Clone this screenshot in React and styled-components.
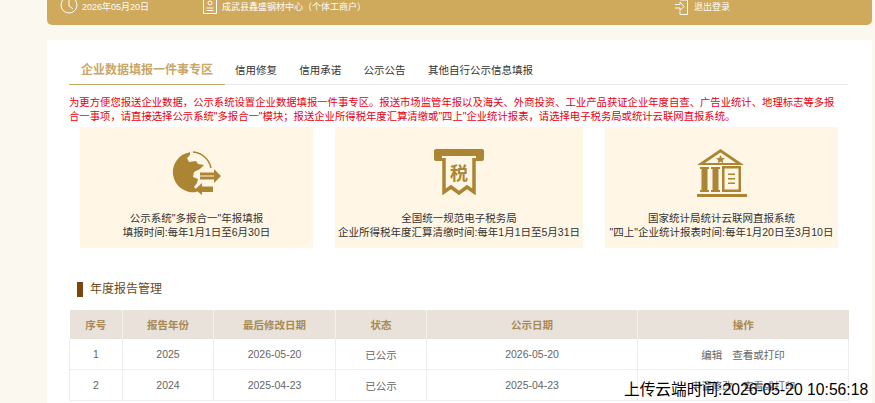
import React from "react";
import styled, { createGlobalStyle } from "styled-components";

const Global = createGlobalStyle`
  html, body {
    margin: 0;
    height: 100%;
    overflow: hidden;
    background: #fbf8f0;
  }
  body, td, th {
    font-family: "Liberation Sans", "Noto Sans CJK SC", sans-serif;
  }
`;

const Page = styled.div`
  width: 875px;
  height: 403px;
  overflow: hidden;
  position: relative;
  padding: 0 3px 0 47px;
  box-sizing: border-box;
`;

const TopBar = styled.header`
  height: 25px;
  background: #cfa95c;
  border-radius: 0 0 5px 5px;
  display: flex;
  color: #fff;
  font-size: 9px;
  padding-left: 13px;
  overflow: hidden;
`;

const TopItem = styled.div`
  display: flex;
  gap: ${(p) => p.$gap || 4}px;
  align-items: flex-start;
  margin-left: ${(p) => p.$left || 0}px;
  line-height: 14px;
`;

const Panel = styled.main`
  margin-top: 15px;
  background: #fff;
  padding: 15px 0 0 22px;
  height: 363px;
  box-sizing: border-box;
`;

const Tabs = styled.nav`
  display: flex;
  width: 779px;
  height: 30px;
  border-bottom: 1px solid #eaeaea;
  box-sizing: border-box;
`;

const Tab = styled.a`
  height: 30px;
  box-sizing: border-box;
  line-height: 30px;
  color: ${(p) => (p.$active ? "#c9a766" : "#333")};
  font-size: ${(p) => (p.$active ? 12 : 10.5)}px;
  font-weight: ${(p) => (p.$active ? "bold" : "normal")};
  padding: 0 ${(p) => (p.$active ? 12 : 0)}px;
  margin-right: ${(p) => (p.$active ? 10 : 22.3)}px;
  border-bottom: ${(p) => (p.$active ? "1px solid #c9a766" : "none")};
`;

const Notice = styled.p`
  margin: 11px 0 0;
  width: 775px;
  color: #e60012;
  font-size: 10.35px;
  line-height: 14px;
`;

const Cards = styled.section`
  display: grid;
  grid-template-columns: 233px 248px 233px;
  column-gap: 22px;
  margin: 3px 0 0 11px;
`;

const Card = styled.div`
  height: 121px;
  background: #fff6e5;
  padding-top: 22px;
  box-sizing: border-box;
  text-align: center;
  color: #333;
  font-size: 10.5px;
  line-height: 14px;
`;

const IconSlot = styled.div`
  height: 49px;
  svg {
    display: block;
    margin: 0 auto;
  }
`;

const CardText = styled.div`
  margin-top: 13px;
  white-space: nowrap;
`;

const Title = styled.h2`
  margin: 34px 0 0 8px;
  height: 15px;
  border-left: 6px solid #7a4510;
  padding-left: 7px;
  font-size: 12px;
  line-height: 15px;
  font-weight: normal;
  color: #6b4a22;
`;

const Table = styled.table`
  margin: 13px 0 0;
  width: 779px;
  border-collapse: collapse;
  table-layout: fixed;
  font-size: 10.5px;
`;

const Th = styled.th`
  height: 29px;
  padding: 0;
  background: #e8e2da;
  color: #a98a55;
  font-weight: bold;
  border-left: 1px solid #f3f0ea;
  &:first-child { border-left: none; }
`;

const Td = styled.td`
  height: 30px;
  padding: 0;
  text-align: center;
  color: #666;
  border: 1px solid #eee;
  border-top: none;
`;

const Action = styled.a`
  color: #666;
  margin: 0 5px;
`;

const TimeStamp = styled.div`
  position: absolute;
  left: 624px;
  top: 381px;
  font-size: 15.7px;
  line-height: 18px;
  color: #000;
  white-space: nowrap;
`;

const ClockIcon = () => (
  <svg width="18" height="15" viewBox="0 0 18 15" fill="none" stroke="#fff" strokeWidth="1">
    <circle cx="9" cy="5" r="8" />
    <path d="M9 0v6l4 3" />
  </svg>
);

const OwnerIcon = () => (
  <svg width="14" height="14" viewBox="0 0 14 14" fill="none" stroke="#fff" strokeWidth="1">
    <path d="M.5 0v13.5h13V0" />
    <circle cx="7" cy="3" r="2" />
    <path d="M3.5 8h7M3.5 10.5h7" />
  </svg>
);

const LogoutIcon = () => (
  <svg width="13" height="15" viewBox="0 0 13 15" fill="none" stroke="#fff" strokeWidth="1">
    <path d="M5 0h7.500v14.500H5v-3" />
    <path d="M0 4.500h5V2l4 4.500-4 4V8H0" />
  </svg>
);

const GlobeIcon = () => (
  <svg width="50" height="46" viewBox="0 0 50 46" fill="#ab8534">
    <path d="M18 3.200A20 20 0 0 0 24 43l2-1-4-4 3-4 1-4-5-2 1-5 6-3 4-4-6-1-2-3-7 1-2-4 3-3z" />
    <path d="M21 3.100A20 20 0 0 1 39 19" fill="none" stroke="#ab8534" strokeWidth="1.500" />
    <path d="M28 23.500h14V20l7 7-7 7v-3.500H28zM28 26.500v1h14v-1z" fillRule="evenodd" />
    <path d="M41 37.500H30V34l-7 6.500 7 5.500v-3h11z" />
  </svg>
);

const TaxIcon = () => (
  <svg width="50" height="46" viewBox="0 0 50 46">
    <rect x="0" y="0" width="50" height="12" rx="2" fill="#ab8534" />
    <rect x="8" y="7" width="34" height="3" fill="#fff6e5" />
    <path d="M10 9v34l7-5 8 6 8-6 7 5V9" fill="#fff6e5" stroke="#ab8534" strokeWidth="3.500" />
    <text x="25" y="31" textAnchor="middle" fontSize="18" fontWeight="bold" fill="#ab8534">税</text>
  </svg>
);

const BankIcon = () => (
  <svg width="50" height="49" viewBox="0 0 50 49" fill="#ab8534">
    <path d="M23.500 0L47 16H0zM23.500 3.500L8 14h31z" fillRule="evenodd" />
    <path d="M23.500 6l1.300 2.900 3.100.3-2.300 2 .7 3-2.800-1.600-2.800 1.600.7-3-2.300-2 3.100-.3z" />
    <rect x="3" y="18" width="9" height="2" />
    <rect x="4.500" y="20" width="6" height="21" />
    <rect x="3" y="41" width="9" height="2" />
    <rect x="14" y="18" width="9" height="2" />
    <rect x="15.500" y="20" width="6" height="21" />
    <rect x="14" y="41" width="9" height="2" />
    <path d="M25 17h19v26H25zM27.500 19.500v21h14v-21z" fillRule="evenodd" />
    <path d="M31 24.500h7V26h-7zM31 29h7v1.500h-7zM31 33.500h7V35h-7z" />
    <rect x="0" y="45" width="50" height="3" />
  </svg>
);

const columns = [53, 91, 122, 91, 211, 211];
const heads = ["序号", "报告年份", "最后修改日期", "状态", "公示日期", "操作"];
const rows = [
  ["1", "2025", "2026-05-20", "已公示", "2026-05-20", ["编辑", "查看或打印"]],
  ["2", "2024", "2025-04-23", "已公示", "2025-04-23", ["申请修改", "查看或打印"]],
];

export default function App() {
  return (
    <Page>
      <Global />
      <TopBar>
        <TopItem>
          <ClockIcon />
          <span>2026年05月20日</span>
        </TopItem>
        <TopItem $left={54} $gap={5}>
          <OwnerIcon />
          <span>成武县鑫盛钢材中心（个体工商户）</span>
        </TopItem>
        <TopItem $left={309} $gap={6}>
          <LogoutIcon />
          <span>退出登录</span>
        </TopItem>
      </TopBar>
      <Panel>
        <Tabs>
          <Tab $active>企业数据填报一件事专区</Tab>
          <Tab>信用修复</Tab>
          <Tab>信用承诺</Tab>
          <Tab>公示公告</Tab>
          <Tab>其他自行公示信息填报</Tab>
        </Tabs>
        <Notice>
          为更方便您报送企业数据，公示系统设置企业数据填报一件事专区。报送市场监管年报以及海关、外商投资、工业产品获证企业年度自查、广告业统计、地理标志等多报合一事项，请直接选择公示系统"多报合一"模块；报送企业所得税年度汇算清缴或"四上"企业统计报表，请选择电子税务局或统计云联网直报系统。
        </Notice>
        <Cards>
          <Card>
            <IconSlot><GlobeIcon /></IconSlot>
            <CardText>
              公示系统"多报合一"年报填报
              <br />
              填报时间:每年1月1日至6月30日
            </CardText>
          </Card>
          <Card>
            <IconSlot><TaxIcon /></IconSlot>
            <CardText>
              全国统一规范电子税务局
              <br />
              企业所得税年度汇算清缴时间:每年1月1日至5月31日
            </CardText>
          </Card>
          <Card>
            <IconSlot><BankIcon /></IconSlot>
            <CardText>
              国家统计局统计云联网直报系统
              <br />
              "四上"企业统计报表时间:每年1月20日至3月10日
            </CardText>
          </Card>
        </Cards>
        <Title>年度报告管理</Title>
        <Table>
          <colgroup>
            {columns.map((w, i) => (
              <col key={i} width={w} />
            ))}
          </colgroup>
          <thead>
            <tr>
              {heads.map((h) => (
                <Th key={h}>{h}</Th>
              ))}
            </tr>
          </thead>
          <tbody>
            {rows.map((r) => (
              <tr key={r[0]}>
                {r.slice(0, 5).map((c, i) => (
                  <Td key={i}>{c}</Td>
                ))}
                <Td>
                  {r[5].map((a) => (
                    <Action key={a}>{a}</Action>
                  ))}
                </Td>
              </tr>
            ))}
          </tbody>
        </Table>
      </Panel>
      <TimeStamp>上传云端时间:2026-05-20 10:56:18</TimeStamp>
    </Page>
  );
}
